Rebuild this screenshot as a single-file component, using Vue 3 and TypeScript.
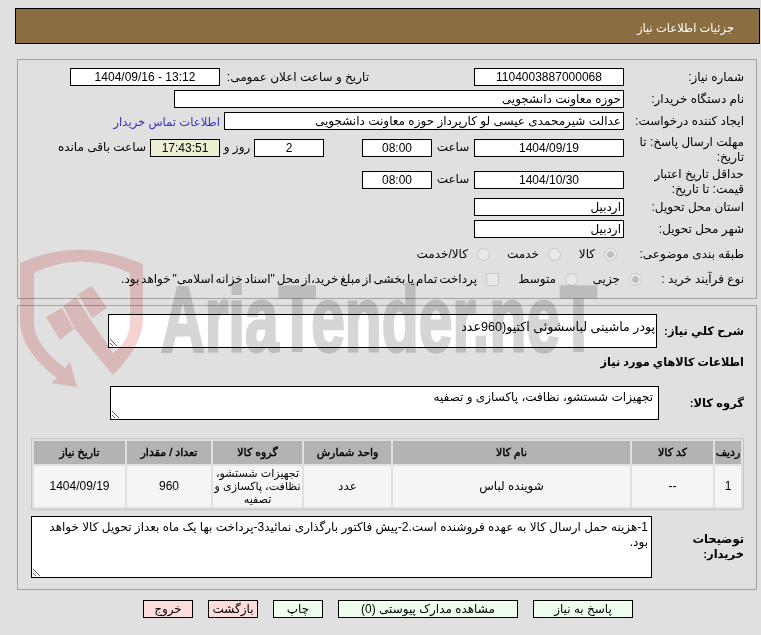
<script setup lang="ts">
const columns = ['ردیف', 'کد کالا', 'نام کالا', 'واحد شمارش', 'گروه کالا', 'تعداد / مقدار', 'تاریخ نیاز']
const cells = ['1', '--', 'شوینده لباس', 'عدد', 'تجهیزات شستشو، نظافت، پاکسازی و تصفیه', '960', '1404/09/19']
const buttons = [
  { text: 'پاسخ به نیاز', cls: 'btn-green b100' },
  { text: 'مشاهده مدارک پیوستی (0)', cls: 'btn-green b180' },
  { text: 'چاپ', cls: 'btn-green b50' },
  { text: 'بازگشت', cls: 'btn-red b50' },
  { text: 'خروج', cls: 'btn-red b50' },
]
const desc1 = 'پودر ماشینی لباسشوئی اکتیو(960عدد'
const desc2 = 'تجهیزات شستشو، نظافت، پاکسازی و تصفیه'
const desc3 = '1-هزینه حمل ارسال کالا به عهده فروشنده است.2-پیش فاکتور بارگذاری نمائید3-پرداخت بها یک ماه بعداز تحویل کالا خواهد بود.'
</script>

<template>
  <div class="page" dir="rtl">
    <div class="head">جزئیات اطلاعات نیاز</div>

    <section class="panel first">
      <div class="row">
        <div class="label">شماره نیاز:</div>
        <div class="field w150 center">1104003887000068</div>
        <div class="pub">تاریخ و ساعت اعلان عمومی:</div>
        <div class="field w150 center" dir="ltr">1404/09/16 - 13:12</div>
      </div>
      <div class="row gap4">
        <div class="label">نام دستگاه خریدار:</div>
        <div class="field w450">حوزه معاونت دانشجویی</div>
      </div>
      <div class="row gap4">
        <div class="label">ایجاد کننده درخواست:</div>
        <div class="field w400">عدالت شیرمحمدی عیسی لو کارپرداز حوزه معاونت دانشجویی</div>
        <a class="link">اطلاعات تماس خریدار</a>
      </div>
      <div class="row tall gap5">
        <div class="label">مهلت ارسال پاسخ: تا تاریخ:</div>
        <div class="field w150 center">1404/09/19</div>
        <div class="unit">ساعت</div>
        <div class="field w70 center">08:00</div>
        <div class="unit2"></div>
        <div class="field w70 center">2</div>
        <div class="unit3">روز و</div>
        <div class="field w70 center timer">17:43:51</div>
        <div class="remain">ساعت باقی مانده</div>
      </div>
      <div class="row tall gap2">
        <div class="label">حداقل تاریخ اعتبار قیمت: تا تاریخ:</div>
        <div class="field w150 center">1404/10/30</div>
        <div class="unit">ساعت</div>
        <div class="field w70 center">08:00</div>
      </div>
      <div class="row gap1">
        <div class="label">استان محل تحویل:</div>
        <div class="field w150">اردبیل</div>
      </div>
      <div class="row gap4">
        <div class="label">شهر محل تحویل:</div>
        <div class="field w150">اردبیل</div>
      </div>
      <div class="row choice gap4">
        <div class="label">طبقه بندی موضوعی:</div>
        <div class="options cat">
          <label class="opt o56"><input class="radio on" type="radio" name="cat" checked disabled /><span>کالا</span></label>
          <label class="opt o71"><input class="radio" type="radio" name="cat" disabled /><span>خدمت</span></label>
          <label class="opt"><input class="radio" type="radio" name="cat" disabled /><span>کالا/خدمت</span></label>
        </div>
      </div>
      <div class="row choice gap1">
        <div class="label short">نوع فرآیند خرید :</div>
        <div class="options">
          <label class="opt o64"><input class="radio on" type="radio" name="kind" checked disabled /><span>جزیی</span></label>
          <label class="opt o79"><input class="radio" type="radio" name="kind" disabled /><span>متوسط</span></label>
          <label class="opt"><input class="check" type="checkbox" disabled /><span class="pay">پرداخت تمام یا بخشی از مبلغ خرید،از محل "اسناد خزانه اسلامی" خواهد بود.</span></label>
        </div>
      </div>
    </section>

    <section class="panel second">
      <div class="row auto">
        <div class="blabel l87">شرح کلي نیاز:</div>
        <textarea class="area a1" readonly :value="desc1"></textarea>
      </div>
      <div class="section-title">اطلاعات کالاهاي مورد نیاز</div>
      <div class="row auto mt15">
        <div class="blabel l85">گروه کالا:</div>
        <textarea class="area a2" readonly :value="desc2"></textarea>
      </div>
      <table class="grid">
        <colgroup>
          <col class="c1" /><col class="c2" /><col class="c3" /><col class="c4" /><col class="c5" /><col class="c6" /><col class="c7" />
        </colgroup>
        <thead>
          <tr><th v-for="c in columns" :key="c">{{ c }}</th></tr>
        </thead>
        <tbody>
          <tr><td v-for="(c, i) in cells" :key="i">{{ c }}</td></tr>
        </tbody>
      </table>
      <div class="row auto mt6">
        <div class="blabel l92">توضیحات خریدار:</div>
        <textarea class="area a3" readonly :value="desc3"></textarea>
      </div>
    </section>

    <div class="actions">
      <button v-for="b in buttons" :key="b.text" type="button" :class="['btn', b.cls]">{{ b.text }}</button>
    </div>

    <svg class="mark" width="761" height="635" viewBox="0 0 761 635" aria-hidden="true">
      <g class="shield">
        <path d="M20 263 Q80 236 143 264 V318 Q143 345 113 375 L75 329 L63 306 L76 297 L90 319 L113 353 Q130 340 130 323 V273 Q80 250 34 273 V323 Q34 345 65 368 L70 362 L77 387 L51 383 L57 378 Q20 350 20 320 Z" />
        <path d="M46 317 L62 308 L74 329 L60 340 Z" />
        <path d="M78 294 L92 286 L107 308 L92 318 Z" />
      </g>
      <text class="brand" x="161" y="351" textLength="436" lengthAdjust="spacingAndGlyphs">AriaTender.neT</text>
    </svg>
  </div>
</template>

<style>
html, body { margin: 0; background: #e0e0e0; overflow: hidden; }
</style>

<style scoped>
.page {
  position: relative;
  width: 761px;
  height: 635px;
  box-sizing: border-box;
  padding: 8px 1px 0 15px;
  background: #e0e0e0;
  color: #000;
  font: 12px/15px "Liberation Sans", "DejaVu Sans", sans-serif;
}
.head {
  box-sizing: border-box;
  height: 36px;
  line-height: 38px;
  padding-right: 25px;
  background: #8b6d42;
  border: 1px solid #000;
  color: #fff;
  font-size: 11.5px;
}
.panel {
  box-sizing: border-box;
  width: 740px;
  margin-right: 3px;
  border: 1px solid #a3a3a3;
  padding: 8px 12px 0;
}
.first { height: 240px; margin-top: 15px; }
.second { height: 285px; margin-top: 6px; }
.row { display: flex; align-items: center; height: 18px; }
.row.auto { height: auto; }
.gap1 { margin-top: 1px; }
.gap2 { margin-top: 2px; }
.gap4 { margin-top: 4px; }
.gap5 { margin-top: 5px; }
.mt15 { margin-top: 15px; }
.mt6 { margin-top: 6px; }
.label { width: 120px; flex: none; box-sizing: border-box; padding-left: 6px; }
.label.short { width: 102px; padding-left: 0; }
.tall { height: 30px; align-items: flex-start; }
.tall .field { margin-top: 4px; }
.tall .unit, .tall .unit2, .tall .unit3 { margin-top: 5px; }
.tall .remain { margin-top: 5px; }
.field {
  box-sizing: border-box;
  height: 18px;
  line-height: 16px;
  flex: none;
  border: 1px solid #000;
  background: #fff;
  padding: 0 2px;
  white-space: nowrap;
  overflow: hidden;
}
.center { text-align: center; }
.w150 { width: 150px; }
.w70 { width: 70px; }
.w400 { width: 400px; }
.w450 { width: 450px; }
.timer { background: #eeeed2; }
.pub { width: 254px; flex: none; box-sizing: border-box; padding-right: 105px; white-space: nowrap; }
.link { margin-right: 4px; color: #3a2fd0; white-space: nowrap; font-size: 11.6px; }
.unit { width: 42px; flex: none; text-align: center; }
.unit2 { width: 38px; flex: none; }
.unit3 { width: 34px; flex: none; text-align: center; }
.remain { margin-right: 4px; white-space: nowrap; }
.choice { height: 24px; }
.options { display: flex; align-items: center; }
.cat { margin-right: 7px; }
.opt { display: flex; align-items: center; gap: 9px; white-space: nowrap; flex: none; }
.o56 { width: 56px; }
.o71 { width: 71px; }
.o64 { width: 64px; }
.o79 { width: 79px; }
.pay { word-spacing: -1.5px; }
.radio, .check {
  appearance: none;
  margin: 0;
  width: 13px;
  height: 13px;
  flex: none;
  box-sizing: border-box;
  border: 1px solid #c8c8c8;
  background: #e8e8e8;
}
.radio { border-radius: 50%; }
.radio.on { background: radial-gradient(circle, #bdbdbd 0 3px, #e8e8e8 3.6px); }
.check { border-radius: 2px; }
.blabel { flex: none; font-weight: bold; font-size: 11.5px; }
.l87 { width: 87px; }
.l85 { width: 85px; }
.l92 { width: 92px; }
.area {
  display: block;
  box-sizing: border-box;
  border: 1px solid #000;
  background: #fff;
  font: inherit;
  color: #000;
  overflow: hidden;
  outline: none;
  resize: both;
  margin: 0;
}
.a1 { width: 549px; height: 34px; padding: 5px 1px 0; font-size: 12.6px; }
.a2 { width: 549px; height: 34px; padding: 3px 5px 0; }
.a3 { width: 621px; height: 62px; padding: 3px 3px 0; }
.section-title { height: 18px; line-height: 18px; margin-top: 5px; font-weight: bold; font-size: 11.3px; }
.grid {
  table-layout: fixed;
  width: 713px;
  margin-top: 18px;
  border: 1px solid #c4c4c4;
  border-spacing: 2px;
  border-collapse: separate;
  height: 72px;
}
.grid th {
  background: #b3b3b3;
  height: 23px;
  padding: 0;
  font-weight: normal;
  font-size: 11px;
  -webkit-text-stroke: 0.4px #000;
}
.grid td { background: #f5f5f5; height: 41px; padding: 0 1px; text-align: center; line-height: 13px; }
.grid td:nth-child(5) { padding: 0; font-size: 11.1px; }
.c1 { width: 26px; }
.c2 { width: 81px; }
.c3 { width: 237px; }
.c4 { width: 87px; }
.c5 { width: 89px; }
.c6 { width: 84px; }
.c7 { width: 91px; }
.actions { display: flex; gap: 15px; margin: 10px 127px 0 0; }
.btn {
  box-sizing: border-box;
  height: 18px;
  padding: 0;
  border: 1px solid #000;
  font: inherit;
  line-height: 16px;
  color: #000;
}
.btn-green { background: #eeffee; }
.btn-red { background: #ffdddd; }
.b100 { width: 100px; }
.b180 { width: 180px; }
.b50 { width: 50px; }
.mark {
  position: absolute;
  left: 0;
  top: 0;
  direction: ltr;
  pointer-events: none;
  mix-blend-mode: multiply;
}
.shield { fill: #f7d2d2; }
.brand {
  fill: #d6d6d6;
  stroke: #d6d6d6;
  stroke-width: 3px;
  font: bold 93px "Liberation Sans", sans-serif;
}
</style>
